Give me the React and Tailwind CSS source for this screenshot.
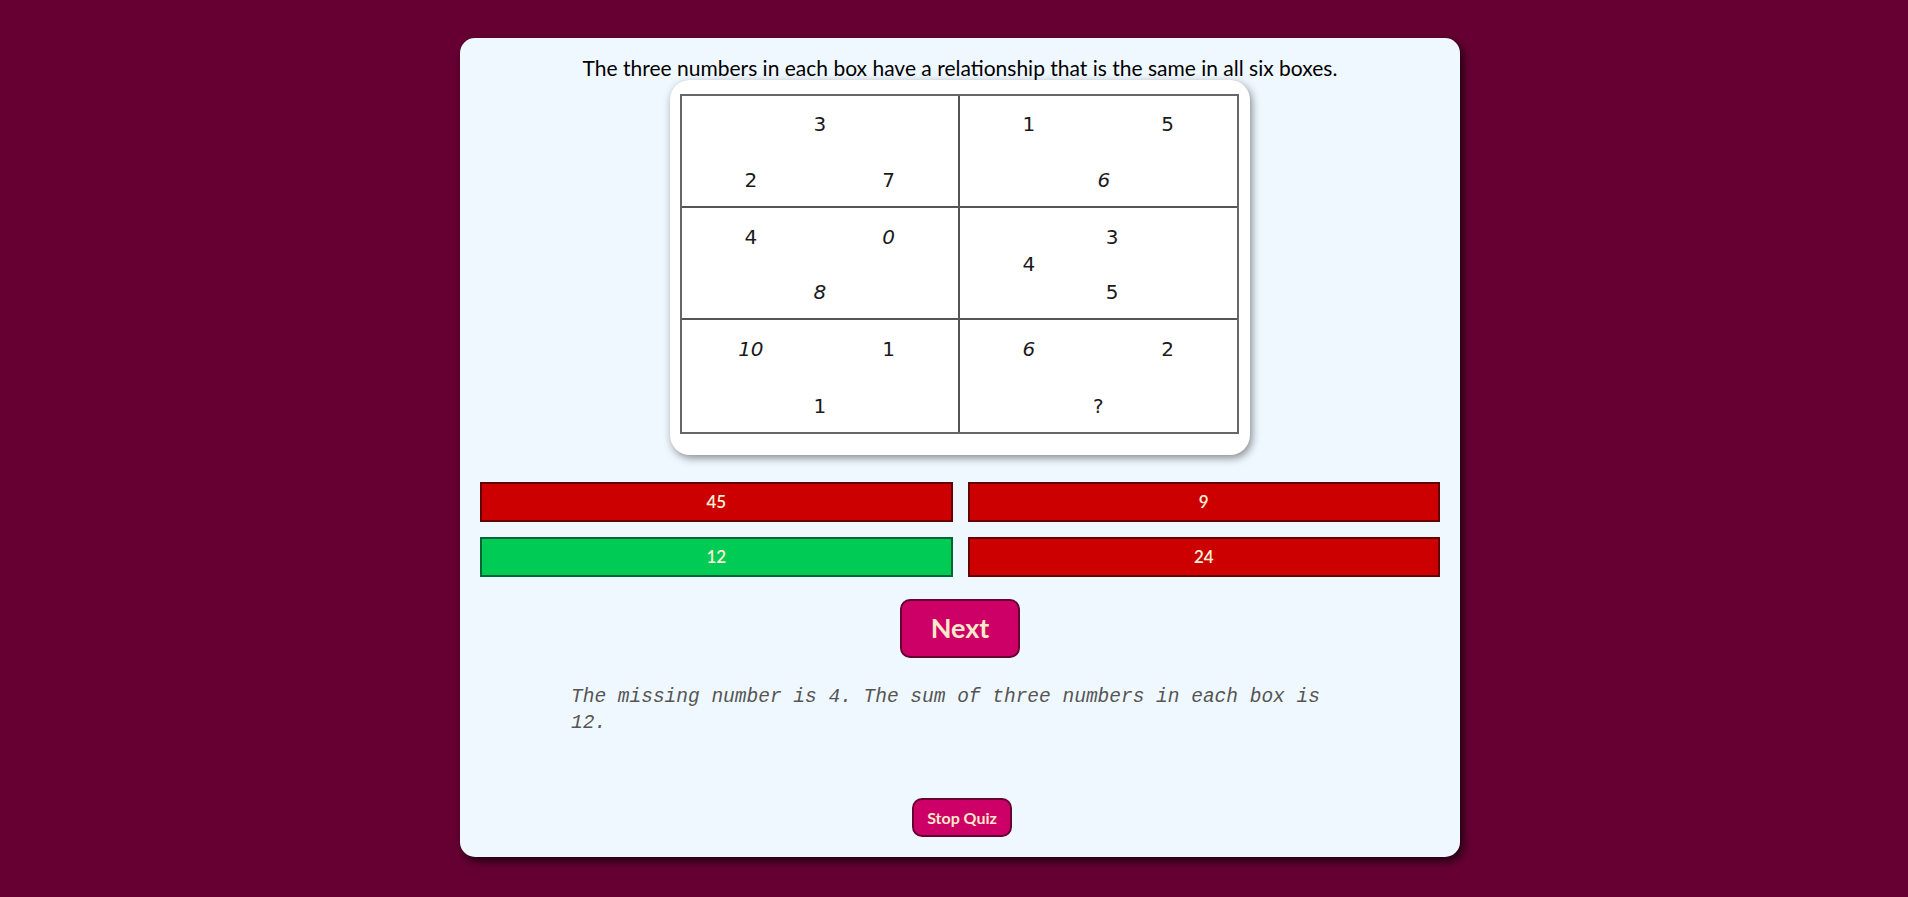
const puzzle = [
  [
    { t: "3", x: "50%", y: "25%" },
    { t: "2", x: "25%", y: "76%" },
    { t: "7", x: "75%", y: "76%" },
  ],
  [
    { t: "1", x: "25%", y: "25%" },
    { t: "5", x: "75%", y: "25%" },
    { t: "6", x: "52%", y: "76%", i: true },
  ],
  [
    { t: "4", x: "25%", y: "26%" },
    { t: "0", x: "75%", y: "26%", i: true },
    { t: "8", x: "50%", y: "76%", i: true },
  ],
  [
    { t: "3", x: "55%", y: "26%" },
    { t: "4", x: "25%", y: "51%" },
    { t: "5", x: "55%", y: "76%" },
  ],
  [
    { t: "10", x: "25%", y: "26%", i: true },
    { t: "1", x: "75%", y: "26%" },
    { t: "1", x: "50%", y: "77%" },
  ],
  [
    { t: "6", x: "25%", y: "26%", i: true },
    { t: "2", x: "75%", y: "26%" },
    { t: "?", x: "50%", y: "77%" },
  ],
];

const answers = [
  { label: "45", correct: false },
  { label: "9", correct: false },
  { label: "12", correct: true },
  { label: "24", correct: false },
];

function PuzzleImage() {
  return (
    <div className="w-[580px] h-[375px] bg-white rounded-[20px] shadow-[2px_3px_8px_rgba(0,0,0,0.45)] pt-[14px] px-[10px]">
      <div className="grid grid-cols-2 grid-rows-3 w-[559px] h-[340px] border-2 border-[#666]">
        {puzzle.map((cell, idx) => (
          <div
            key={idx}
            className={
              "relative border-[#555] " +
              (idx % 2 === 0 ? "border-r-2 " : "") +
              (idx < 4 ? "border-b-2" : "")
            }
          >
            {cell.map((n, j) => (
              <span
                key={j}
                className={
                  "absolute -translate-x-1/2 -translate-y-1/2 text-[20px] font-medium text-[#1a1a1a] font-['DejaVu_Sans',sans-serif] " +
                  (n.i ? "italic" : "")
                }
                style={{ left: n.x, top: n.y }}
              >
                {n.t}
              </span>
            ))}
          </div>
        ))}
      </div>
    </div>
  );
}

export default function App() {
  return (
    <div className="min-h-screen bg-[#660033] font-['Lato',sans-serif] pt-[38px]">
      <div className="w-[1000px] h-[819px] ml-[460px] bg-[#f0f8ff] rounded-[15px] shadow-[3px_4px_10px_rgba(0,0,0,0.75)] px-[20px] pt-[17px] flex flex-col items-center">
        <div className="text-[21px] leading-[25px] text-black">
          The three numbers in each box have a relationship that is the same in all six boxes.
        </div>

        <PuzzleImage />

        <div className="grid grid-cols-2 gap-[15px] w-full mt-[27px]">
          {answers.map((a) => (
            <button
              key={a.label}
              className={
                "h-[40px] border-2 text-[17px] font-semibold text-[#fff1d8] " +
                (a.correct
                  ? "bg-[#00cc55] border-[#006633]"
                  : "bg-[#cc0000] border-[#660000]")
              }
            >
              {a.label}
            </button>
          ))}
        </div>

        <button className="mt-[22px] w-[120px] h-[59px] rounded-[10px] bg-[#cc0066] border-2 border-[#660033] text-[27px] font-bold text-[#ffe9c8]">
          Next
        </button>

        <p className="mt-[26px] w-[778px] pr-[10px] font-['Liberation_Mono',monospace] italic text-[19.5px] leading-[26px] text-[#555]">
          The missing number is 4. The sum of three numbers in each box is 12.
        </p>

        <button className="mt-[62px] ml-[4px] w-[100px] h-[39px] rounded-[10px] bg-[#cc0066] border-2 border-[#660033] text-[16px] font-bold text-[#ffe9c8]">
          Stop Quiz
        </button>
      </div>
    </div>
  );
}
